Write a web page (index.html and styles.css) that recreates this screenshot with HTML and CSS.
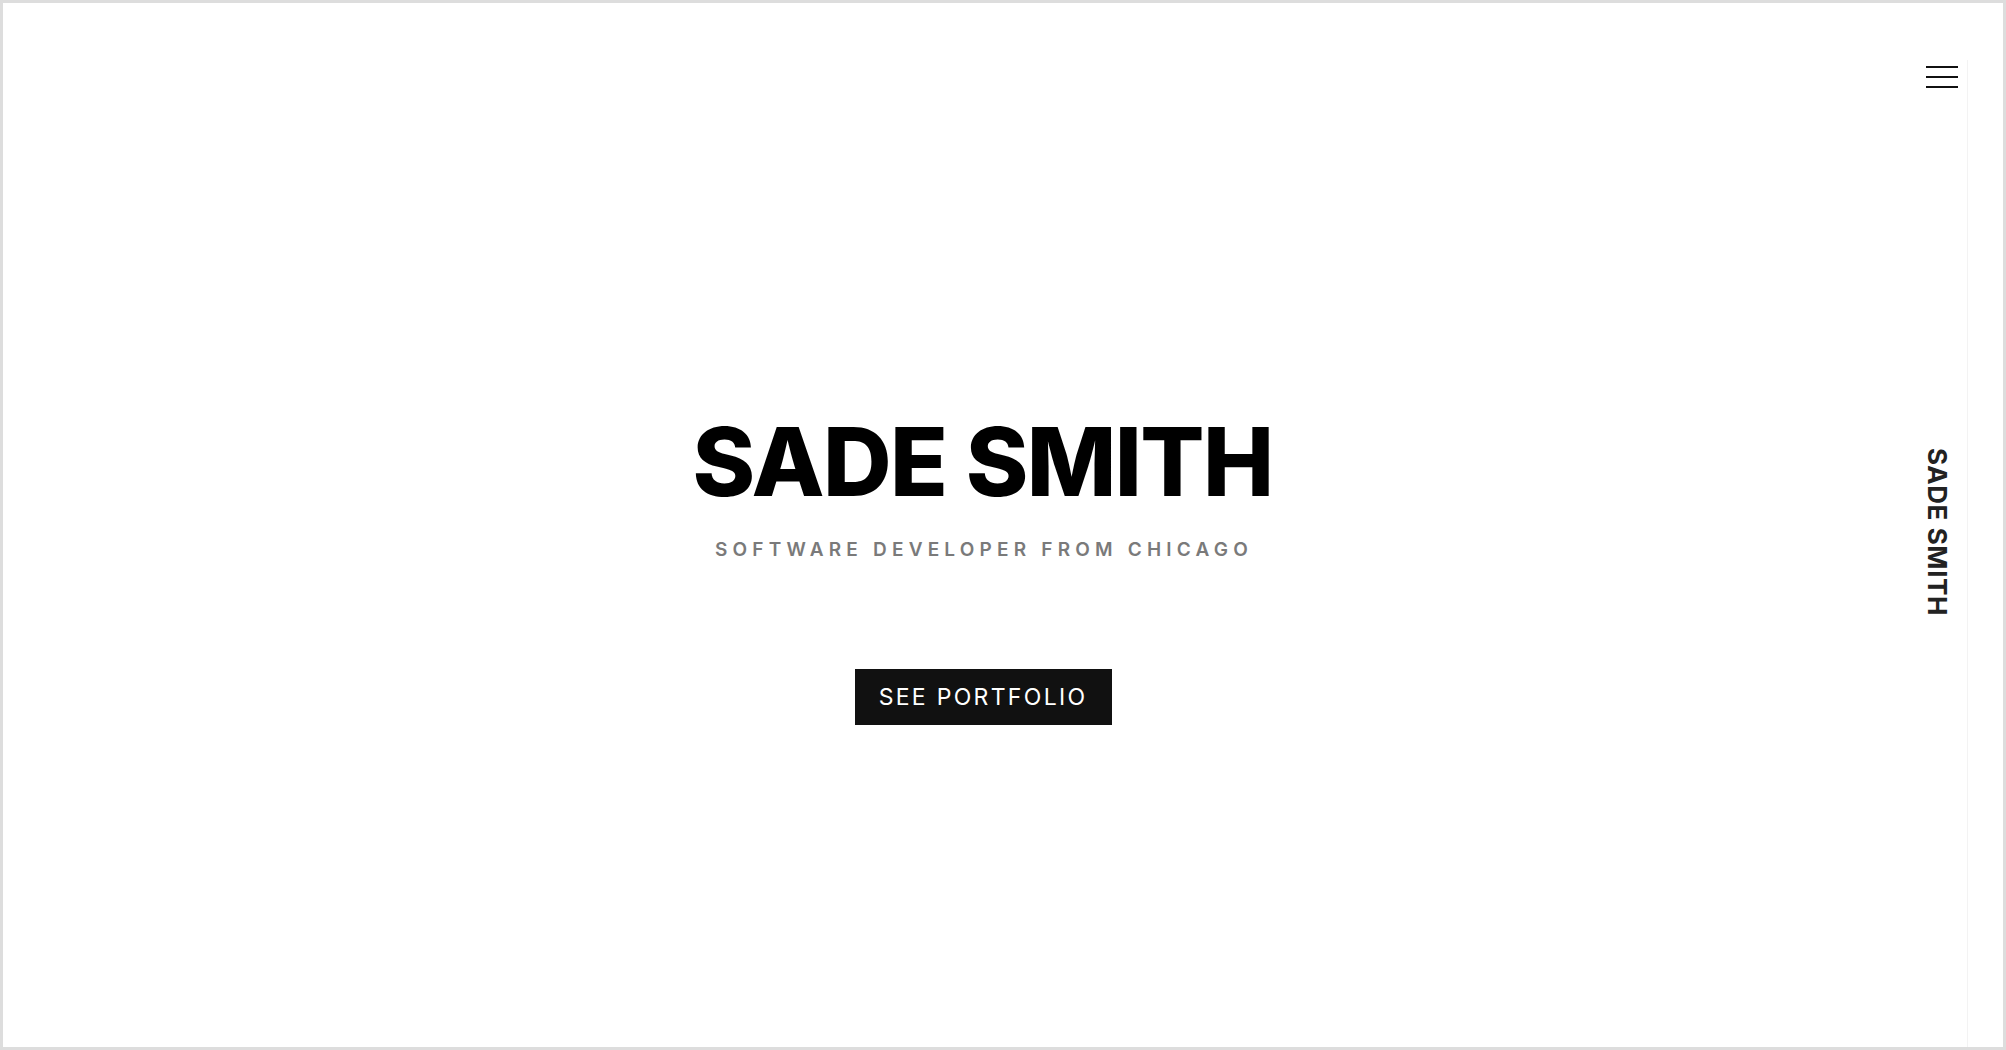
FILE: index.html
```html
<!DOCTYPE html>
<html lang="en">
<head>
<meta charset="utf-8">
<title>Sade Smith</title>
<link rel="stylesheet" href="styles.css">
</head>
<body>
<div class="frame">
  <main class="main">
    <section class="hero">
      <h1 class="title">SADE SMITH</h1>
      <p class="subtitle">SOFTWARE DEVELOPER FROM CHICAGO</p>
      <a class="btn" href="#">SEE PORTFOLIO</a>
    </section>
    <button class="menu" aria-label="Menu">
      <span></span><span></span><span></span>
    </button>
    <div class="side-name">SADE SMITH</div>
  </main>
  <div class="strip"></div>
</div>
</body>
</html>
```
FILE: styles.css
```css
* { box-sizing: border-box; }
html, body { margin: 0; padding: 0; background: #fff; }
body { font-family: Inter, "Noto Sans", sans-serif; }
.frame {
  width: 2006px;
  height: 1050px;
  border: 3px solid #dddddd;
  display: flex;
  background: #fff;
}
.main {
  position: relative;
  flex: 1;
  display: flex;
  flex-direction: column;
  align-items: center;
  justify-content: center;
  padding-top: 80px;
}
.strip {
  width: 36px;
  margin-top: 57px;
  border-left: 1px solid #f3f3f3;
}
.hero {
  display: flex;
  flex-direction: column;
  align-items: center;
}
.title {
  margin: 0 0 0 -5px;
  font-size: 95px;
  line-height: 1.2;
  font-weight: 800;
  color: #000;
  letter-spacing: -1.6px;
}
.subtitle {
  margin: 17px 0 0;
  font-size: 19px;
  line-height: 1.45;
  font-weight: 600;
  color: #7a7a7a;
  letter-spacing: 5.2px;
  padding-right: 2px;
}
.btn {
  margin-top: 106px;
  margin-right: 3px;
  height: 56px;
  padding: 0 25px 0 24px;
  display: flex;
  align-items: center;
  background: #111;
  color: #fff;
  text-decoration: none;
  font-size: 23px;
  font-weight: 400;
  letter-spacing: 2.3px;
}
.menu {
  position: absolute;
  top: 63px;
  right: 9px;
  width: 32px;
  height: 22px;
  padding: 0;
  border: 0;
  background: transparent;
  display: flex;
  flex-direction: column;
  justify-content: space-between;
}
.menu span {
  display: block;
  height: 2px;
  background: #111;
}
.side-name {
  position: absolute;
  right: 17px;
  top: 50%;
  transform: translateY(-50%);
  margin-top: 7px;
  writing-mode: vertical-rl;
  font-size: 26px;
  font-weight: 700;
  color: #222;
  letter-spacing: 0.6px;
  line-height: 1;
}
```
